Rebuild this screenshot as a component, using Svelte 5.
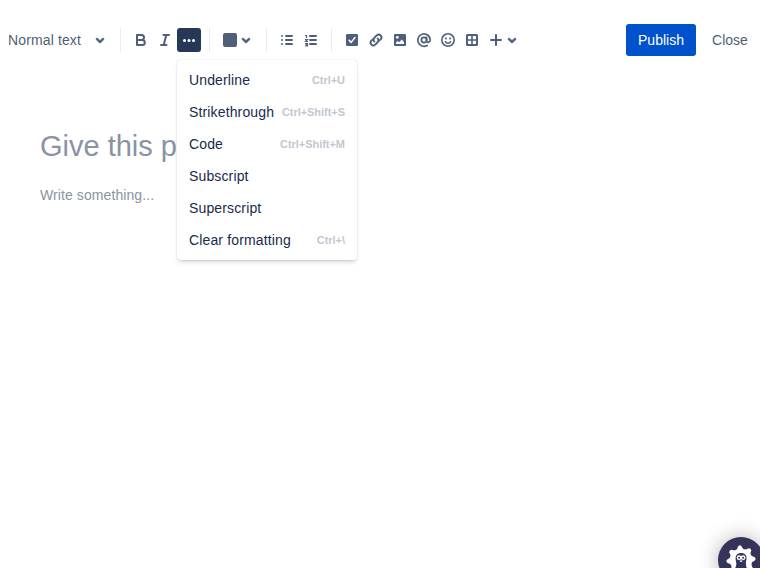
<script>
  const menu = [
    ['Underline', 'Ctrl+U'],
    ['Strikethrough', 'Ctrl+Shift+S'],
    ['Code', 'Ctrl+Shift+M'],
    ['Subscript', ''],
    ['Superscript', ''],
    ['Clear formatting', 'Ctrl+\\']
  ];
</script>

{#snippet chevron()}
  <svg class="chevron" width="16" height="24" viewBox="4 0 16 24"><path fill="currentColor" stroke="currentColor" stroke-width=".5" d="M8.292 10.293a1.009 1.009 0 0 0 0 1.419l2.939 2.965c.218.215.5.322.779.322s.556-.107.769-.322l2.93-2.955a1.01 1.01 0 0 0 0-1.419.987.987 0 0 0-1.406 0l-2.298 2.317-2.307-2.327a.99.99 0 0 0-1.406 0z" /></svg>
{/snippet}

<div class="page">
  <header>
    <div class="toolbar">
      <button class="style"><span>Normal text</span>{@render chevron()}</button>
      <div class="group marks">
        <button aria-label="Bold"><svg viewBox="0 0 24 24"><path d="M8 7h5M8 17h5.500M8 12h5M8 7v10M12.500 7a2.500 2.500 0 0 1 0 5M13.300 12a2.500 2.500 0 0 1 0 5" fill="none" stroke="currentColor" stroke-width="2" stroke-linecap="round" /></svg></button>
        <button aria-label="Italic"><svg viewBox="0 0 24 24"><path d="M10.500 7h5.500M8 17h5.500M13.300 7l-2.600 10" fill="none" stroke="currentColor" stroke-width="2" stroke-linecap="round" /></svg></button>
        <div class="more">
          <button class="active" aria-label="More formatting"><svg viewBox="0 0 24 24" fill="currentColor"><circle cx="7.500" cy="12.500" r="1.500" /><circle cx="12" cy="12.500" r="1.500" /><circle cx="16.500" cy="12.500" r="1.500" /></svg></button>
          <div class="menu">
            {#each menu as [label, shortcut]}
              <div class="item"><span>{label}</span>{#if shortcut}<kbd>{shortcut}</kbd>{/if}</div>
            {/each}
          </div>
        </div>
      </div>
      <div class="group color">
        <button class="wide" aria-label="Text color"><span class="swatch"></span>{@render chevron()}</button>
      </div>
      <div class="group lists">
        <button aria-label="Bullet list"><svg viewBox="0 0 24 24"><path d="M11 8h6M11 12h6M11 16h6M7 8h0M7 12h0M7 16h0" fill="none" stroke="currentColor" stroke-width="2" stroke-linecap="round" /></svg></button>
        <button aria-label="Numbered list"><svg viewBox="0 0 24 24" fill="none" stroke="currentColor"><path d="M11 8h6M11 12h6M11 16h6" stroke-width="2" stroke-linecap="round" /><path d="M6 7.500h1.500V10M6 11.500h2.500L6.500 13.500h2.500M6 15.500h2.500v2.500H6M6.500 16.700h2" stroke-width="1.200" /></svg></button>
      </div>
      <div class="group insert">
        <button aria-label="Action item"><svg viewBox="0 0 24 24"><rect x="6" y="6" width="12" height="12" rx="1.300" fill="currentColor" /><path d="M9.200 12.400l2 2 3.800-4.900" fill="none" stroke="#fff" stroke-width="1.500" stroke-linecap="round" stroke-linejoin="round" /></svg></button>
        <button aria-label="Link"><svg viewBox="0 0 24 24"><path d="M10.400 13.600a2.700 2.700 0 0 1 0-3.900l2.500-2.500a2.770 2.770 0 0 1 3.900 3.900l-1.600 1.600M13.600 10.400a2.700 2.700 0 0 1 0 3.900l-2.500 2.500a2.770 2.770 0 0 1-3.900-3.900l1.600-1.600" fill="none" stroke="currentColor" stroke-width="1.900" stroke-linecap="round" /></svg></button>
        <button aria-label="Image"><svg viewBox="0 0 24 24"><rect x="6" y="6" width="12" height="12" rx="1.300" fill="currentColor" /><circle cx="9.300" cy="9.300" r="1.400" fill="#fff" /><path d="M8 16v-1.500l1.800-1.500 1.400 1.200 2.600-2.700 2.200 2.500v2z" fill="#fff" /></svg></button>
        <button aria-label="Mention"><svg viewBox="0 0 24 24"><g fill="none" stroke="currentColor" stroke-width="1.700" stroke-linecap="round"><circle cx="12" cy="12" r="2.600" /><path d="M14.600 9.300v3.500c0 2.300 3.600 2 3.600-.8A6.200 6.200 0 1 0 15.200 17.400" /></g></svg></button>
        <button aria-label="Emoji"><svg viewBox="0 0 24 24"><circle cx="12" cy="12" r="6.200" fill="none" stroke="currentColor" stroke-width="1.600" /><path d="M9.400 13.600a2.850 2.850 0 0 0 5.200 0" fill="none" stroke="currentColor" stroke-width="1.500" stroke-linecap="round" /><circle cx="10" cy="10.500" r="1" fill="currentColor" /><circle cx="14" cy="10.500" r="1" fill="currentColor" /></svg></button>
        <button aria-label="Table"><svg viewBox="0 0 24 24"><path fill="currentColor" fill-rule="evenodd" d="M7.500 6h9A1.500 1.500 0 0 1 18 7.500v9a1.500 1.500 0 0 1-1.500 1.500h-9A1.500 1.500 0 0 1 6 16.500v-9A1.500 1.500 0 0 1 7.500 6zM8 8v3.200h3.200V8zM12.800 8v3.200H16V8zM8 12.800V16h3.200v-3.200zM12.800 12.800V16H16v-3.200z" /></svg></button>
        <button class="wide plus" aria-label="Insert"><svg viewBox="0 0 24 24"><path d="M12 7v10M7 12h10" stroke="currentColor" stroke-width="2" stroke-linecap="round" /></svg>{@render chevron()}</button>
      </div>
    </div>
    <div class="actions">
      <button class="publish">Publish</button>
      <button class="close">Close</button>
    </div>
  </header>
  <main>
    <h1>Give this p</h1>
    <p>Write something...</p>
  </main>
  <div class="badge">
    <svg width="46" height="46" viewBox="0 0 46 46">
      <g transform="translate(23 23)" fill="#fff">
        <circle r="11.300" />
        {#each [0, 45, 90, 135, 180, 225, 270, 315] as a}
          <path transform="rotate({a - 5})" d="M-3.600-10L-1.500-14Q0-15.400 1.500-14L3.600-10z" />
        {/each}
      </g>
      <path d="M16.500 32c1.500-2 2.300-4 1.600-7-1.500-5.500.4-9 5-9s6.300 3.500 5 8c-.6 2-.2 5 1.400 8l-4 5-6-1z" fill="#36335a" />
      <g fill="none" stroke="#fff" stroke-width="1.400"><circle cx="21.100" cy="20.700" r="1.700" /><circle cx="25.100" cy="20.700" r="1.700" /></g>
      <path d="M21.200 23.500L23.100 25.200l1.900-1.700z" fill="#fff" />
      <path d="M28 29l2.500 3" stroke="#fff" stroke-width=".7" fill="none" />
    </svg>
  </div>
</div>

<style>
  :global(body) { margin: 0; background: #fff; }
  .page { position: relative; height: 568px; overflow: hidden; font-family: "Liberation Sans", Arial, sans-serif; font-size: 14px; color: #505f79; }
  header { box-sizing: border-box; height: 80px; padding: 0 0 0 8px; display: flex; align-items: center; justify-content: space-between; }
  .toolbar, .group, .actions { display: flex; align-items: center; }
  button { display: flex; align-items: center; justify-content: center; width: 24px; height: 24px; padding: 0; border: 0; border-radius: 3px; background: none; color: #505f79; font: inherit; }
  button svg { display: block; width: 24px; height: 24px; flex: none; }
  button svg.chevron { width: 16px; }
  .style { width: 112px; justify-content: flex-start; gap: 11px; }
  .style span { width: 73px; white-space: nowrap; text-align: left; letter-spacing: .13px; }
  .group { height: 24px; border-left: 1px solid #ebecf0; }
  .marks { padding: 0 8px; }
  .color { padding: 0 12px 0 12px; }
  .lists { padding: 0 8px; }
  .insert { padding-left: 8px; }
  .wide { width: 32px; }
  .swatch { width: 14px; height: 14px; border-radius: 2px; background: #505f79; flex: none; margin: 0 1px; }
  .plus { width: 40px; justify-content: flex-start; }
  .plus .chevron { margin-left: -4px; }
  .more { position: relative; }
  .active { background: #253858; color: #fff; }
  .menu { position: absolute; z-index: 2; top: 32px; left: 0; box-sizing: border-box; width: 180px; height: 200px; padding: 4px 0; border-radius: 3px; background: #fff; box-shadow: 0 3px 5px -2px rgba(9, 30, 66, .28), 0 0 1px rgba(9, 30, 66, .31); }
  .item { box-sizing: border-box; height: 32px; padding: 0 12px; display: flex; align-items: center; justify-content: space-between; color: #172b4d; white-space: nowrap; letter-spacing: .14px; }
  kbd { font: bold 11px "Liberation Sans", Arial, sans-serif; letter-spacing: -.04px; color: #c1c7d0; }
  .actions { gap: 4px; }
  .publish { width: 70px; height: 32px; background: #0052cc; color: #fff; }
  .close { width: 60px; height: 32px; }
  main { padding: 48px 40px 0; color: #8993a4; }
  h1 { width: 137px; margin: 0; font-size: 29px; line-height: 36px; font-weight: 400; white-space: nowrap; }
  p { width: 137px; margin: 21px 0 0; line-height: 20px; letter-spacing: .09px; white-space: nowrap; }
  .badge { position: absolute; left: 718px; top: 537px; width: 46px; height: 46px; border-radius: 50%; background: #36335a; box-shadow: 0 0 20px rgba(0, 0, 0, .3); }
  .badge svg { display: block; }
</style>
